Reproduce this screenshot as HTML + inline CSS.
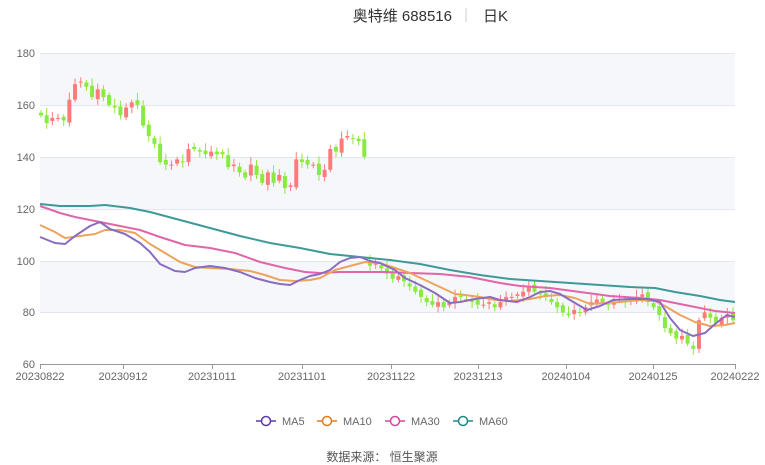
<!DOCTYPE html>
<html><head><meta charset="utf-8"><style>
html,body{margin:0;padding:0;background:#fff;width:765px;height:465px;overflow:hidden;font-family:"Liberation Sans","Noto Sans CJK SC",sans-serif;}
</style></head><body>
<svg id="s" width="765" height="465" xmlns="http://www.w3.org/2000/svg" font-family="Liberation Sans, Noto Sans CJK SC, sans-serif">
<text x="452" y="21" font-size="15" fill="#333" text-anchor="end">奥特维 688516</text>
<line x1="466" y1="8" x2="466" y2="22" stroke="#ccc"/>
<text x="483" y="21" font-size="15" fill="#333">日K</text>
<rect x="40" y="53" width="695" height="52" fill="#f6f7fb"/>
<rect x="40" y="157" width="695" height="52" fill="#f6f7fb"/>
<rect x="40" y="261" width="695" height="51" fill="#f6f7fb"/>
<g stroke="#e3e7ef" stroke-width="1">
<line x1="40" y1="53.5" x2="735" y2="53.5"/><line x1="40" y1="105.5" x2="735" y2="105.5"/>
<line x1="40" y1="157.5" x2="735" y2="157.5"/><line x1="40" y1="209.5" x2="735" y2="209.5"/>
<line x1="40" y1="261.5" x2="735" y2="261.5"/><line x1="40" y1="312.5" x2="735" y2="312.5"/>
</g>
<line x1="40" y1="364.5" x2="735" y2="364.5" stroke="#999"/>
<g font-size="11" fill="#666" text-anchor="end">
<text x="35" y="57">180</text><text x="35" y="109">160</text><text x="35" y="161">140</text>
<text x="35" y="213">120</text><text x="35" y="265">100</text><text x="35" y="316">80</text><text x="35" y="368">60</text>
</g>
<g font-size="11" fill="#666" text-anchor="middle" id="xl"></g>
<g id="c"></g>
<g fill="none" stroke-width="2" stroke-linejoin="round">
<polyline stroke="#3e9a98" points="40,204 60,206 90,206 105,205 130,208 150,212 180,220 210,228 240,236 270,243 300,248 330,254 360,257 390,260 420,264 450,270 480,275 510,279 540,281 570,283 600,285 630,287 655,288 675,292 700,296 720,300 735,302"/>
<polyline stroke="#e066a8" points="40,206 60,213 75,217 100,222 120,226 140,230 160,237 185,245 210,248 235,253 260,262 285,268 305,272 320,273 340,272 360,272 385,272 410,273 440,274 470,277 500,283 520,286 550,288 580,292 610,296 640,298 660,300 680,304 700,308 715,311 735,313"/>
<polyline stroke="#eca45c" points="40,225 55,232 65,238 80,236 95,234 105,230 120,230 135,233 150,244 165,253 180,262 195,267 210,268 230,269 250,271 265,275 280,280 295,281 310,280 320,278 335,270 350,266 365,262 380,263 395,268 410,273 425,280 440,287 455,294 465,295 480,297 495,300 510,301 530,299 545,296 560,295 575,298 590,304 605,303 620,302 640,300 655,301 665,306 680,315 695,322 710,326 725,325 735,323"/>
<polyline stroke="#8a6cc0" points="40,237 55,243 65,244 75,236 90,226 100,222 110,229 125,234 140,243 150,252 160,264 175,271 185,272 195,268 210,266 225,268 240,272 255,278 270,282 280,284 290,285 300,280 310,276 320,274 330,270 340,262 350,258 360,257 370,261 380,263 395,270 405,278 420,285 435,293 450,303 460,302 475,299 490,297 500,300 517,302 530,297 540,292 550,291 560,294 575,303 587,310 600,306 613,300 630,299 647,299 660,302 670,318 680,330 693,336 705,333 715,324 727,315 735,317"/>
</g>
<g font-size="11" fill="#666">
<g stroke-width="1.5" fill="#fff">
<line x1="256" y1="421" x2="276" y2="421" stroke="#5b3aa8"/><circle cx="266" cy="421" r="4.5" stroke="#5b3aa8"/>
<line x1="317" y1="421" x2="337" y2="421" stroke="#e07b22"/><circle cx="327" cy="421" r="4.5" stroke="#e07b22"/>
<line x1="385" y1="421" x2="405" y2="421" stroke="#d9449a"/><circle cx="395" cy="421" r="4.5" stroke="#d9449a"/>
<line x1="453" y1="421" x2="473" y2="421" stroke="#1f8a88"/><circle cx="463" cy="421" r="4.5" stroke="#1f8a88"/>
</g>
<text x="282" y="425">MA5</text><text x="343" y="425">MA10</text><text x="411" y="425">MA30</text><text x="479" y="425">MA60</text>
</g>
<text x="382" y="461" font-size="12" fill="#555" text-anchor="middle">数据来源：  恒生聚源</text>
</svg>
<script>
var NS="http://www.w3.org/2000/svg";
function el(n,a,p){var e=document.createElementNS(NS,n);for(var k in a)e.setAttribute(k,a[k]);p.appendChild(e);return e;}
var xl=document.getElementById('xl');
[[40,'20230822'],[123,'20230912'],[212,'20231011'],[302,'20231101'],[391,'20231122'],[478,'20231213'],[566,'20240104'],[653,'20240125'],[735,'20240222']].forEach(function(d){
el('line',{x1:d[0]+.5,y1:364,x2:d[0]+.5,y2:369,stroke:'#999'},xl);
var t=el('text',{x:d[0],y:380},xl);t.textContent=d[1];});
var cl=[156,153,155,155,154,162,168,169,167,163,166,163,160,159,156,159,161,160,152,148,145,138,137,137,139,138,143,143,142,141,142,141,141,136,137,134,132,137,133,130,134,130,133,128,129,139,138,137,137,133,135,143,142,147,148,147,146,140,
98,99,97,95,93,94,92,90,88,86,84,83,84,82,84,86,86,85,84,83,83,84,82,84,86,86,87,88,90,88,87,86,84,82,80,79,81,80,82,84,85,84,83,84,85,84,85,86,87,84,82,79,74,72,70,71,68,66,77,80,78,76,78,79,77];
var g=document.getElementById('c');
function Y(p){return 53+(180-p)*2.595;}
var n=cl.length,step=(733-41)/(n-1);
for(var i=0;i<n;i++){
 var o=i==0?157:(i==58?100:cl[i-1]+((i*7)%5-2)*0.4);
 var c=cl[i];var up=c>=o;var col=up?'#ff7b7b':'#89ea3f';
 var hi=Math.max(o,c)+1+(i*3%4)*0.6,lo=Math.min(o,c)-1-(i*5%3)*0.6;
 var x=41+i*step;
 el('line',{x1:x,y1:Y(hi),x2:x,y2:Y(lo),stroke:col,'stroke-width':1},g);
 var t=Y(Math.max(o,c)),b=Y(Math.min(o,c));
 el('rect',{x:x-2,y:t,width:4,height:Math.max(1,b-t),fill:col},g);
}
</script>
</body></html>
